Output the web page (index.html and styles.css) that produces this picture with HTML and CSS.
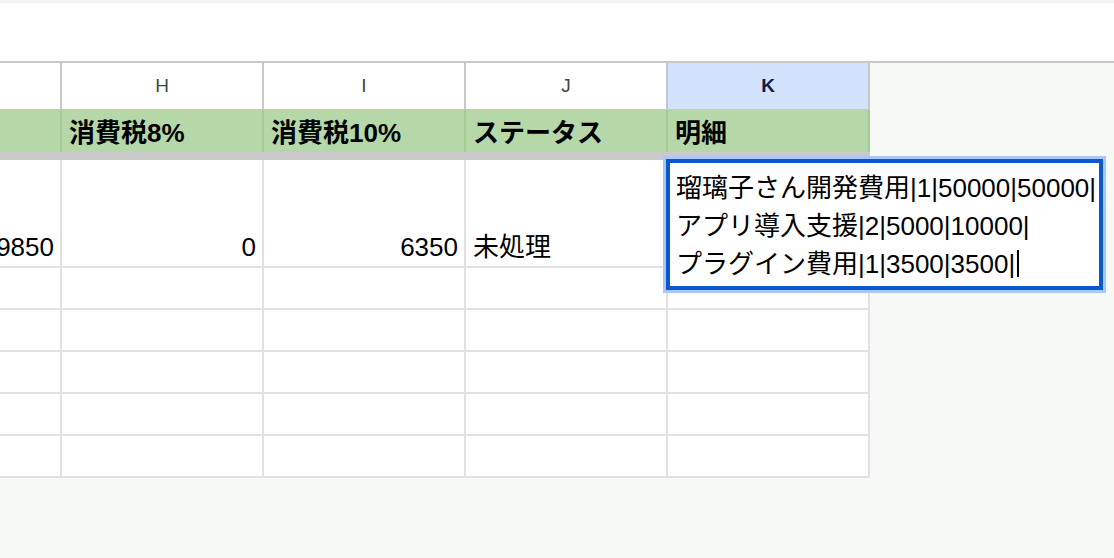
FILE: index.html
```html
<!DOCTYPE html>
<html>
<head>
    <title>明細シート</title>
    <link rel="stylesheet" href="styles.css">
</head>
<body>
    <div class="toolbar"></div>
    <div class="sheet">
        <div class="grid">
            <div class="col-head"></div>
            <div class="col-head">H</div>
            <div class="col-head">I</div>
            <div class="col-head">J</div>
            <div class="col-head selected">K</div>

            <div class="cell head"></div>
            <div class="cell head">消費税8%</div>
            <div class="cell head">消費税10%</div>
            <div class="cell head">ステータス</div>
            <div class="cell head">明細</div>

            <div class="freeze"></div>

            <div class="cell num">9850</div>
            <div class="cell num">0</div>
            <div class="cell num">6350</div>
            <div class="cell">未処理</div>
            <div class="cell"></div>

            <div class="cell"></div><div class="cell"></div><div class="cell"></div><div class="cell"></div><div class="cell"></div>
            <div class="cell"></div><div class="cell"></div><div class="cell"></div><div class="cell"></div><div class="cell"></div>
            <div class="cell"></div><div class="cell"></div><div class="cell"></div><div class="cell"></div><div class="cell"></div>
            <div class="cell"></div><div class="cell"></div><div class="cell"></div><div class="cell"></div><div class="cell"></div>
            <div class="cell"></div><div class="cell"></div><div class="cell"></div><div class="cell"></div><div class="cell"></div>
        </div>

        <div class="editor">
            <div class="editor-inner">
                <div class="line">瑠璃子さん開発費用|1|50000|50000|</div>
                <div class="line">アプリ導入支援|2|5000|10000|</div>
                <div class="line">プラグイン費用|1|3500|3500|<span class="caret"></span></div>
            </div>
        </div>
    </div>
</body>
</html>
```

FILE: styles.css
```css
body {
    margin: 0;
    font-family: "Liberation Sans", "Noto Sans CJK JP", sans-serif;
    background-color: #f7f9f6;
    color: #000;
}
.toolbar {
    height: 63px;
    box-sizing: border-box;
    background-color: #fff;
    border-top: 3px solid #f3f4f4;
    border-bottom: 2px solid #c7c9c8;
}
.sheet {
    position: relative;
    display: flex;
}
.grid {
    display: grid;
    grid-template-columns: 62px repeat(4, 202px);
    grid-template-rows: 47px 42px 8px 108px repeat(5, 42px);
}
.col-head {
    display: flex;
    align-items: center;
    justify-content: center;
    background-color: #fff;
    border-right: 2px solid #c7c9c8;
    border-bottom: 1px solid #c7c9c8;
    font-size: 19px;
    color: #444746;
}
.col-head.selected {
    background-color: #d3e3fd;
    color: #0b1d45;
    font-weight: bold;
}
.cell {
    display: flex;
    align-items: flex-end;
    padding: 0 6px 4px 7px;
    background-color: #fff;
    border-right: 2px solid #e1e1e1;
    border-bottom: 2px solid #e1e1e1;
    font-size: 26px;
    line-height: 30px;
    white-space: nowrap;
    overflow: hidden;
}
.cell.head {
    background-color: #b6d7a8;
    border-right-color: #a5cb95;
    border-bottom: none;
    font-weight: bold;
}
.cell.num {
    justify-content: flex-end;
}
.freeze {
    grid-column: 1 / -1;
    background-color: #cacaca;
}
.editor {
    position: absolute;
    left: 663px;
    top: 93px;
    width: 443px;
    box-sizing: border-box;
    border: 3px solid #a8c7fa;
}
.editor-inner {
    background-color: #fff;
    border: 4px solid #0b57d0;
    padding: 6px 6px 3px 6px;
}
.line {
    font-size: 26px;
    line-height: 38px;
    white-space: nowrap;
}
.caret {
    display: inline-block;
    height: 27px;
    margin-left: 2px;
    border-left: 2px solid #000;
    vertical-align: -4px;
}
```
